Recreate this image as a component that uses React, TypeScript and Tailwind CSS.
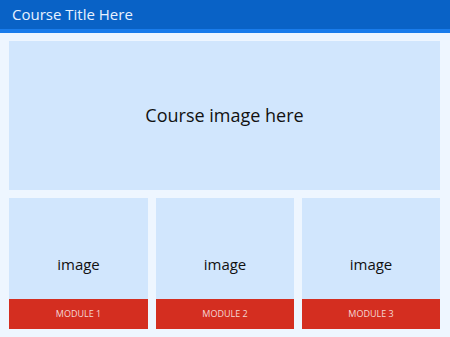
const modules = ['MODULE 1', 'MODULE 2', 'MODULE 3'];

export default function App() {
  return (
    <div className="h-[337px] w-[450px] bg-[#eef6ff] font-['Open_Sans',_sans-serif]">
      <header className="flex h-[29px] items-center bg-[#0962c6] px-[12px] text-[15px] text-[#e8f1ff]">
        Course&nbsp;Title Here
      </header>
      <div className="h-[4px] bg-[#1a7ceb]" />
      <main className="flex flex-col gap-[8px] pl-[9px] pr-[10px] pt-[8px]">
        <div className="flex h-[149px] items-center justify-center bg-[#d1e6fd] text-[18px] text-[#111]">
          Course image here
        </div>
        <div className="grid grid-cols-[139px_138px_138px] gap-[8px]">
          {modules.map((m) => (
            <div key={m} className="flex flex-col">
              <div className="flex h-[101px] items-end justify-center bg-[#d1e6fd] pb-[24px] text-[15px] text-[#111]">
                image
              </div>
              <div className="flex h-[30px] items-center justify-center bg-[#d42e20] text-[9px] text-[#f4d7d4]">
                {m}
              </div>
            </div>
          ))}
        </div>
      </main>
    </div>
  );
}
